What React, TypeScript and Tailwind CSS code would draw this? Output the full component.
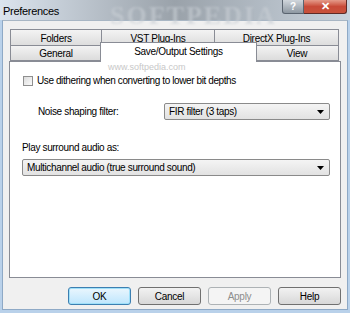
import React from "react";

const font = { fontFamily: '"Liberation Sans", Arial, sans-serif' };

function Tab({ label, w, selected = false }: { label: string; w: string; selected?: boolean }) {
  return (
    <div
      className={`${w} flex items-center justify-center border border-[#898c95] text-[10px] tracking-[-0.3px] text-black ${
        selected
          ? "bg-white border-b-0 relative z-10"
          : "bg-gradient-to-b from-[#f3f3f3] to-[#dcdcdc]"
      }`}
    >
      {label}
    </div>
  );
}

function Combo({ value, className }: { value: string; className: string }) {
  return (
    <div
      className={`${className} h-[17px] flex items-center justify-between rounded-[2px] border border-[#8a8a8a] bg-gradient-to-b from-[#f4f4f4] to-[#e2e2e2] pl-[4px] pr-[5px] text-[10px] tracking-[-0.35px] text-black`}
    >
      <span>{value}</span>
      <svg width="7" height="4" viewBox="0 0 7 4">
        <path d="M0 0H7L3.5 4Z" fill="#000" />
      </svg>
    </div>
  );
}

function Btn({ label, kind }: { label: string; kind: "default" | "normal" | "disabled" }) {
  const cls =
    kind === "default"
      ? "border-[#3c7fb1] bg-gradient-to-b from-[#eaf6fd] to-[#bee6fd] shadow-[inset_0_0_0_1px_#9fe0f9] text-black"
      : kind === "disabled"
      ? "border-[#adb2b5] bg-[#f4f4f4] text-[#8d8d8d]"
      : "border-[#707070] bg-gradient-to-b from-[#f2f2f2] to-[#d8d8d8] text-black";
  return (
    <div
      className={`w-[63px] h-[18px] flex items-center justify-center rounded-[3px] border text-[10px] tracking-[-0.3px] ${cls}`}
    >
      {label}
    </div>
  );
}

export default function App() {
  return (
    <div
      className="w-[350px] h-[313px] overflow-hidden flex flex-col bg-[#b9d1ea] relative"
      style={font}
    >
      {/* title bar */}
      <div className="h-[20px] flex items-start relative bg-gradient-to-r from-[#dbe4ee] via-[#9aa2aa] to-[#c9d3dd]">
        <div className="absolute left-[110px] top-[-4px] text-[26px] font-bold tracking-[2px] text-[#c8ced4] opacity-60 blur-[1px]" style={{ fontFamily: '"Liberation Serif", serif' }}>
          SOFTPEDIA
        </div>
        <div className="relative pl-[3px] pt-[3px] text-[11px] tracking-[-0.3px] text-black">Preferences</div>
        <div className="ml-auto mr-[3px] flex relative">
          <div className="w-[22px] h-[14px] flex items-center justify-center rounded-bl-[3px] border border-[#5a6470] border-t-0 bg-gradient-to-b from-[#d0d6dc] to-[#8e98a2] text-[10px] font-bold text-white">
            ?
          </div>
          <div className="w-[43px] h-[14px] flex items-center justify-center rounded-br-[3px] border border-l-0 border-t-0 border-[#5e2a26] bg-gradient-to-b from-[#e49a8a] via-[#c84a38] to-[#c8523c] text-[11px] font-bold text-white">
            ✕
          </div>
        </div>
      </div>

      {/* client area */}
      <div className="flex-1 mx-[2px] mb-[3px] bg-[#f0f0f0] flex flex-col pl-[6px] pr-[6px] pt-[8px] border border-[#8ea9c6] border-t-[#a8b6c4]">
        {/* tab rows */}
        <div className="flex flex-col">
          <div className="flex h-[18px] ml-[1px]">
            <Tab label="Folders" w="w-[92px]" />
            <Tab label="VST Plug-Ins" w="w-[114px] -ml-[1px]" />
            <Tab label="DirectX Plug-Ins" w="w-[125px] -ml-[1px]" />
          </div>
          <div className="flex h-[16px] ml-[1px] -mt-[2px] items-end relative z-10">
            <Tab label="General" w="w-[92px] h-[16px]" />
            <Tab label="Save/Output Settings" w="w-[157px] h-[20px] -ml-[2px] -mb-[1px] pb-[3px]" selected />
            <Tab label="View" w="w-[84px] h-[16px] -ml-[2px]" />
          </div>
        </div>

        {/* panel */}
        <div className="h-[217px] border border-[#898c95] bg-white flex flex-col relative">
          <div className="absolute left-[98px] top-[-1px] text-[9px] text-[#c8c8c8]">www.softpedia.com</div>
          <div className="flex items-center gap-[4px] mt-[11px] ml-[13px]">
            <div className="w-[10px] h-[10px] border border-[#8f8f8f] bg-gradient-to-br from-[#dcdcdc] to-[#fbfbfb]" />
            <span className="text-[10px] tracking-[-0.4px] text-black">Use dithering when converting to lower bit depths</span>
          </div>
          <div className="flex items-center mt-[15px]">
            <span className="ml-[28px] w-[126px] text-[10px] tracking-[-0.35px] text-black">Noise shaping filter:</span>
            <Combo value="FIR filter (3 taps)" className="w-[166px]" />
          </div>
          <div className="ml-[12px] mt-[20px] text-[10px] tracking-[-0.35px] text-black">Play surround audio as:</div>
          <Combo value="Multichannel audio (true surround sound)" className="ml-[12px] mt-[4px] w-[308px]" />
        </div>

        {/* buttons */}
        <div className="flex justify-end gap-[7px] mt-[9px]">
          <Btn label="OK" kind="default" />
          <Btn label="Cancel" kind="normal" />
          <Btn label="Apply" kind="disabled" />
          <Btn label="Help" kind="normal" />
        </div>
      </div>
    </div>
  );
}
